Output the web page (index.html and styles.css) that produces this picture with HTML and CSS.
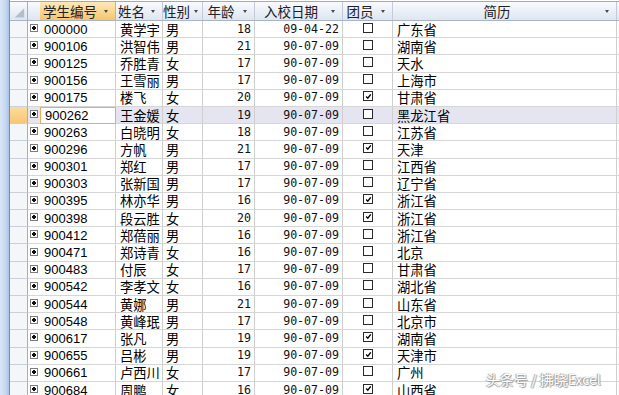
FILE: index.html
```html
<!DOCTYPE html>
<html lang="zh">
<head>
<meta charset="utf-8">
<link rel="stylesheet" href="styles.css">
</head>
<body>
<div class="wrap">
  <div class="strip"></div>
  <div class="grid">
    <div class="hdr">
      <div class="h corner"><svg width="18" height="18" viewBox="0 0 18 18"><polygon points="5,16 15,16 15,6" fill="#b3bdcc"/></svg></div>
      <div class="h hexp"></div>
      <div class="h w-id active"><span class="t">学生编号</span><span class="arr"></span></div>
      <div class="h w-name"><span class="t">姓名</span><span class="arr"></span></div>
      <div class="h w-sex"><span class="t">性别</span><span class="arr"></span></div>
      <div class="h w-age"><span class="t">年龄</span><span class="arr"></span></div>
      <div class="h w-date"><span class="t">入校日期</span><span class="arr"></span></div>
      <div class="h w-mem"><span class="t">团员</span><span class="arr"></span></div>
      <div class="h w-res"><span class="t">简历</span><span class="arr"></span></div>
      <div class="h rest"></div>
    </div>

    <div class="row"><div class="sel"></div><div class="exp"><span class="plus"></span></div><div class="c w-id id">000000</div><div class="c w-name">黄学宇</div><div class="c w-sex">男</div><div class="c w-age num">18</div><div class="c w-date num">09-04-22</div><div class="c w-mem"><span class="cb"></span></div><div class="c w-res">广东省</div><div class="c rest"></div></div>
    <div class="row"><div class="sel"></div><div class="exp"><span class="plus"></span></div><div class="c w-id id">900106</div><div class="c w-name">洪智伟</div><div class="c w-sex">男</div><div class="c w-age num">21</div><div class="c w-date num">90-07-09</div><div class="c w-mem"><span class="cb"></span></div><div class="c w-res">湖南省</div><div class="c rest"></div></div>
    <div class="row"><div class="sel"></div><div class="exp"><span class="plus"></span></div><div class="c w-id id">900125</div><div class="c w-name">乔胜青</div><div class="c w-sex">女</div><div class="c w-age num">17</div><div class="c w-date num">90-07-09</div><div class="c w-mem"><span class="cb"></span></div><div class="c w-res">天水</div><div class="c rest"></div></div>
    <div class="row"><div class="sel"></div><div class="exp"><span class="plus"></span></div><div class="c w-id id">900156</div><div class="c w-name">王雪丽</div><div class="c w-sex">男</div><div class="c w-age num">17</div><div class="c w-date num">90-07-09</div><div class="c w-mem"><span class="cb"></span></div><div class="c w-res">上海市</div><div class="c rest"></div></div>
    <div class="row"><div class="sel"></div><div class="exp"><span class="plus"></span></div><div class="c w-id id">900175</div><div class="c w-name">楼飞</div><div class="c w-sex">女</div><div class="c w-age num">20</div><div class="c w-date num">90-07-09</div><div class="c w-mem"><span class="cb"><svg viewBox="0 0 8 8"><path d="M1.3 3.9 L3.2 5.9 L6.6 1.6" stroke="#000" stroke-width="1.6" fill="none"/></svg></span></div><div class="c w-res">甘肃省</div><div class="c rest"></div></div>
    <div class="row current"><div class="sel"></div><div class="exp"><span class="plus"></span></div><div class="c w-id id focus">900262</div><div class="c w-name">王金媛</div><div class="c w-sex">女</div><div class="c w-age num">19</div><div class="c w-date num">90-07-09</div><div class="c w-mem"><span class="cb"></span></div><div class="c w-res">黑龙江省</div><div class="c rest"></div></div>
    <div class="row"><div class="sel"></div><div class="exp"><span class="plus"></span></div><div class="c w-id id">900263</div><div class="c w-name">白晓明</div><div class="c w-sex">女</div><div class="c w-age num">18</div><div class="c w-date num">90-07-09</div><div class="c w-mem"><span class="cb"></span></div><div class="c w-res">江苏省</div><div class="c rest"></div></div>
    <div class="row"><div class="sel"></div><div class="exp"><span class="plus"></span></div><div class="c w-id id">900296</div><div class="c w-name">方帆</div><div class="c w-sex">男</div><div class="c w-age num">21</div><div class="c w-date num">90-07-09</div><div class="c w-mem"><span class="cb"><svg viewBox="0 0 8 8"><path d="M1.3 3.9 L3.2 5.9 L6.6 1.6" stroke="#000" stroke-width="1.6" fill="none"/></svg></span></div><div class="c w-res">天津</div><div class="c rest"></div></div>
    <div class="row"><div class="sel"></div><div class="exp"><span class="plus"></span></div><div class="c w-id id">900301</div><div class="c w-name">郑红</div><div class="c w-sex">男</div><div class="c w-age num">17</div><div class="c w-date num">90-07-09</div><div class="c w-mem"><span class="cb"></span></div><div class="c w-res">江西省</div><div class="c rest"></div></div>
    <div class="row"><div class="sel"></div><div class="exp"><span class="plus"></span></div><div class="c w-id id">900303</div><div class="c w-name">张新国</div><div class="c w-sex">男</div><div class="c w-age num">17</div><div class="c w-date num">90-07-09</div><div class="c w-mem"><span class="cb"></span></div><div class="c w-res">辽宁省</div><div class="c rest"></div></div>
    <div class="row"><div class="sel"></div><div class="exp"><span class="plus"></span></div><div class="c w-id id">900395</div><div class="c w-name">林亦华</div><div class="c w-sex">男</div><div class="c w-age num">16</div><div class="c w-date num">90-07-09</div><div class="c w-mem"><span class="cb"><svg viewBox="0 0 8 8"><path d="M1.3 3.9 L3.2 5.9 L6.6 1.6" stroke="#000" stroke-width="1.6" fill="none"/></svg></span></div><div class="c w-res">浙江省</div><div class="c rest"></div></div>
    <div class="row"><div class="sel"></div><div class="exp"><span class="plus"></span></div><div class="c w-id id">900398</div><div class="c w-name">段云胜</div><div class="c w-sex">女</div><div class="c w-age num">20</div><div class="c w-date num">90-07-09</div><div class="c w-mem"><span class="cb"><svg viewBox="0 0 8 8"><path d="M1.3 3.9 L3.2 5.9 L6.6 1.6" stroke="#000" stroke-width="1.6" fill="none"/></svg></span></div><div class="c w-res">浙江省</div><div class="c rest"></div></div>
    <div class="row"><div class="sel"></div><div class="exp"><span class="plus"></span></div><div class="c w-id id">900412</div><div class="c w-name">郑蓓丽</div><div class="c w-sex">男</div><div class="c w-age num">16</div><div class="c w-date num">90-07-09</div><div class="c w-mem"><span class="cb"></span></div><div class="c w-res">浙江省</div><div class="c rest"></div></div>
    <div class="row"><div class="sel"></div><div class="exp"><span class="plus"></span></div><div class="c w-id id">900471</div><div class="c w-name">郑诗青</div><div class="c w-sex">女</div><div class="c w-age num">16</div><div class="c w-date num">90-07-09</div><div class="c w-mem"><span class="cb"></span></div><div class="c w-res">北京</div><div class="c rest"></div></div>
    <div class="row"><div class="sel"></div><div class="exp"><span class="plus"></span></div><div class="c w-id id">900483</div><div class="c w-name">付辰</div><div class="c w-sex">女</div><div class="c w-age num">17</div><div class="c w-date num">90-07-09</div><div class="c w-mem"><span class="cb"></span></div><div class="c w-res">甘肃省</div><div class="c rest"></div></div>
    <div class="row"><div class="sel"></div><div class="exp"><span class="plus"></span></div><div class="c w-id id">900542</div><div class="c w-name">李孝文</div><div class="c w-sex">女</div><div class="c w-age num">16</div><div class="c w-date num">90-07-09</div><div class="c w-mem"><span class="cb"></span></div><div class="c w-res">湖北省</div><div class="c rest"></div></div>
    <div class="row"><div class="sel"></div><div class="exp"><span class="plus"></span></div><div class="c w-id id">900544</div><div class="c w-name">黄娜</div><div class="c w-sex">男</div><div class="c w-age num">21</div><div class="c w-date num">90-07-09</div><div class="c w-mem"><span class="cb"></span></div><div class="c w-res">山东省</div><div class="c rest"></div></div>
    <div class="row"><div class="sel"></div><div class="exp"><span class="plus"></span></div><div class="c w-id id">900548</div><div class="c w-name">黄峰珉</div><div class="c w-sex">男</div><div class="c w-age num">17</div><div class="c w-date num">90-07-09</div><div class="c w-mem"><span class="cb"></span></div><div class="c w-res">北京市</div><div class="c rest"></div></div>
    <div class="row"><div class="sel"></div><div class="exp"><span class="plus"></span></div><div class="c w-id id">900617</div><div class="c w-name">张凡</div><div class="c w-sex">男</div><div class="c w-age num">19</div><div class="c w-date num">90-07-09</div><div class="c w-mem"><span class="cb"><svg viewBox="0 0 8 8"><path d="M1.3 3.9 L3.2 5.9 L6.6 1.6" stroke="#000" stroke-width="1.6" fill="none"/></svg></span></div><div class="c w-res">湖南省</div><div class="c rest"></div></div>
    <div class="row"><div class="sel"></div><div class="exp"><span class="plus"></span></div><div class="c w-id id">900655</div><div class="c w-name">吕彬</div><div class="c w-sex">男</div><div class="c w-age num">19</div><div class="c w-date num">90-07-09</div><div class="c w-mem"><span class="cb"><svg viewBox="0 0 8 8"><path d="M1.3 3.9 L3.2 5.9 L6.6 1.6" stroke="#000" stroke-width="1.6" fill="none"/></svg></span></div><div class="c w-res">天津市</div><div class="c rest"></div></div>
    <div class="row"><div class="sel"></div><div class="exp"><span class="plus"></span></div><div class="c w-id id">900661</div><div class="c w-name">卢西川</div><div class="c w-sex">女</div><div class="c w-age num">17</div><div class="c w-date num">90-07-09</div><div class="c w-mem"><span class="cb"></span></div><div class="c w-res">广州</div><div class="c rest"></div></div>
    <div class="row"><div class="sel"></div><div class="exp"><span class="plus"></span></div><div class="c w-id id">900684</div><div class="c w-name">周鹏</div><div class="c w-sex">女</div><div class="c w-age num">16</div><div class="c w-date num">90-07-09</div><div class="c w-mem"><span class="cb"><svg viewBox="0 0 8 8"><path d="M1.3 3.9 L3.2 5.9 L6.6 1.6" stroke="#000" stroke-width="1.6" fill="none"/></svg></span></div><div class="c w-res">山西省</div><div class="c rest"></div></div>
  </div>
</div>
<div class="watermark">头条号 / 拂晓Excel</div>
</body>
</html>
```

FILE: styles.css
```css
html, body {
  margin: 0;
  padding: 0;
}
body {
  width: 619px;
  height: 395px;
  overflow: hidden;
  background: #ffffff;
  position: relative;
  font-family: "Noto Sans CJK SC", "Liberation Sans", sans-serif;
  color: #000;
}
.wrap {
  display: flex;
  height: 395px;
}
.strip {
  width: 10px;
  flex: none;
  box-sizing: border-box;
  background: linear-gradient(to right, #d9e6f7 0%, #c7d9f0 60%, #a9c2e6 100%);
  border-right: 1px solid #6f8fbf;
}
.grid {
  flex: 1;
  display: flex;
  flex-direction: column;
  min-width: 0;
}

/* header */
.hdr {
  display: flex;
  flex: none;
  height: 20px;
  margin-top: 1px;
  box-sizing: border-box;
  border-top: 1px solid #9aabc8;
  border-bottom: 1px solid #a9b3c3;
  background: linear-gradient(#f8fafd, #dfe6f1);
}
.h {
  flex: none;
  box-sizing: border-box;
  display: flex;
  align-items: center;
  border-right: 1px solid #c3cbd8;
  font-size: 13.5px;
  line-height: 16px;
  color: #222;
}
.h .t {
  flex: 1;
  text-align: center;
  white-space: nowrap;
}
.h .arr {
  flex: none;
  width: 12px;
  margin-right: 3px;
  display: flex;
  justify-content: center;
}
.h .arr::after {
  content: "";
  border-left: 2.5px solid transparent;
  border-right: 2.5px solid transparent;
  border-top: 3px solid #4a4a4a;
}
.h.corner {
  width: 18px;
  border-right: 1px solid #a3aec0;
}
.h.hexp {
  width: 12px;
  border-right: none;
}
.h.active {
  background: linear-gradient(#fde9b8, #f7c56c);
  border-right-color: #e0b060;
}
.h.rest {
  flex: 1;
  border-right: none;
}

/* column widths */
.w-id { width: 76px; }
.w-name { width: 47px; }
.w-sex { width: 40px; }
.w-age { width: 52px; }
.w-date { width: 88px; }
.w-mem { width: 50px; }
.w-res { width: 224px; }

/* rows */
.row {
  display: flex;
  flex: none;
  height: 17.2px;
}
.sel {
  width: 18px;
  flex: none;
  box-sizing: border-box;
  background: #f4f6f9;
  border-right: 1px solid #a3aec0;
  border-bottom: 1px solid #c9d0db;
}
.exp {
  width: 12px;
  flex: none;
  box-sizing: border-box;
  display: flex;
  align-items: center;
  justify-content: center;
  border-bottom: 1px solid #d6d6d6;
  padding-bottom: 2px;
}
.plus {
  position: relative;
  width: 8px;
  height: 8px;
  box-sizing: border-box;
  border: 1px solid #7d7d7d;
  background: #fff;
}
.plus::before,
.plus::after {
  content: "";
  position: absolute;
  background: #111;
}
.plus::before {
  left: 1px;
  top: 2px;
  width: 4px;
  height: 2px;
}
.plus::after {
  left: 2px;
  top: 1px;
  width: 2px;
  height: 4px;
}
.c {
  flex: none;
  box-sizing: border-box;
  display: flex;
  align-items: center;
  border-right: 1px solid #cfcfcf;
  border-bottom: 1px solid #d6d6d6;
  padding-left: 4px;
  font-size: 13.3px;
  line-height: 15px;
  white-space: nowrap;
}
.c.w-sex { padding-left: 3px; }
.c.id {
  font-family: "Liberation Sans", Arial, sans-serif;
  font-size: 13px;
}
.c.num {
  justify-content: flex-end;
  padding-left: 0;
  padding-right: 3px;
  font-family: "DejaVu Sans Mono", monospace;
  font-size: 11.6px;
  color: #111;
}
.c.w-mem {
  justify-content: center;
  padding-left: 0;
  padding-bottom: 3px;
}
.c.rest {
  flex: 1;
  border-right: none;
  padding: 0;
}
.cb {
  width: 10px;
  height: 10px;
  box-sizing: border-box;
  border: 1px solid #2b2b2b;
  background: #fff;
  display: block;
  margin-left: 1px;
  padding: 0.5px;
}
.cb svg {
  display: block;
  width: 7px;
  height: 7px;
}

/* current record */
.row.current {
  background: #e4e5f0;
}
.row.current .sel {
  background: linear-gradient(#fbdc9c, #f7c874);
  border-right-color: #d9a850;
}
.row.current .c.focus {
  background: #fff;
  border: 1px solid #eea860;
}

/* watermark overlay */
.watermark {
  position: absolute;
  left: 486px;
  top: 371px;
  font-family: "Noto Sans CJK SC", sans-serif;
  font-size: 14px;
  line-height: 17px;
  color: #ffffff;
  text-shadow: 0 0 1px #8a8a8a, 1px 1px 1px #9a9a9a, -1px 0 1px #a0a0a0;
  white-space: nowrap;
}
```
